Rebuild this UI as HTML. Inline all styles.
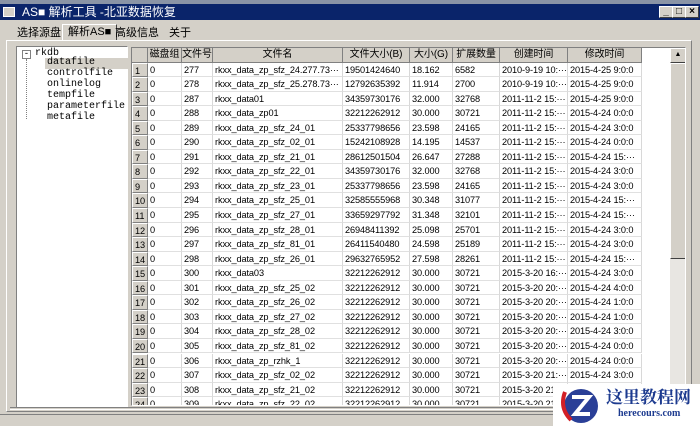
<!DOCTYPE html>
<html><head><meta charset="utf-8"><style>
*{margin:0;padding:0;box-sizing:border-box}
body{width:700px;height:426px;overflow:hidden;background:#d4d0c8;font:11px "Liberation Sans","Noto Sans CJK SC",sans-serif;color:#000;position:relative}
.abs{position:absolute}
#title{left:0;top:4px;width:700px;height:16px;background:#0a246a;color:#fff;font-size:12px;line-height:16px;padding-left:22px}
#title .ic{position:absolute;left:3px;top:3px;width:12px;height:10px;background:#d4d0c8;border:1px solid #fff}
.wb{position:absolute;top:2px;width:14px;height:12px;background:#d4d0c8;border:1px solid;border-color:#fff #404040 #404040 #fff;color:#000;font-size:10px;line-height:9px;text-align:center;font-weight:bold}
.tab{position:absolute;top:26px;height:14px;font-size:11px;line-height:14px;padding:0 5px}
#panel{left:6px;top:40px;width:686px;height:372px;border:1px solid;border-color:#fff #808080 #808080 #fff}
#tree{left:16px;top:46px;width:112px;height:362px;background:#fff;border:1px solid;border-color:#808080 #fff #fff #808080;font-family:"Liberation Mono",monospace;font-size:10px}
#grid{left:131px;top:47px;width:555px;height:359px;background:#fff;border:1px solid;border-color:#808080 #fff #fff #808080;overflow:hidden}
.row{position:absolute;left:0;height:14.55px;width:540px;font-size:9.2px;line-height:14px;letter-spacing:-0.1px}
.row span{position:absolute;top:0;height:14.55px;border-right:1px solid #d8d8d8;border-bottom:1px solid #e0e0e0;padding-left:2px;white-space:nowrap;overflow:hidden}
.hd span{background:#d4d0c8;border-right:1px solid #808080;border-bottom:1px solid #808080;text-align:center;padding:0;font-size:10px}
.row span.n{background:#d4d0c8;border:1px solid;border-color:#fff #808080 #808080 #fff;padding-left:2px}
.c0{left:0;width:16px}.c1{left:16px;width:34px}.c2{left:50px;width:31px}.c3{left:81px;width:130px}.c4{left:211px;width:67px}.c5{left:278px;width:43px}.c6{left:321px;width:47px}.c7{left:368px;width:68px}.c8{left:436px;width:74px}
</style></head><body>
<div class="abs" style="left:0;top:0;width:700px;height:4px;background:#8a94a6"></div>
<div id="title" class="abs"><div class="ic"></div>AS■ 解析工具 -北亚数据恢复
<div class="wb" style="left:659px">_</div><div class="wb" style="left:672px">□</div><div class="wb" style="left:685px">×</div></div>
<div class="tab" style="left:12px">选择源盘</div>
<div class="tab" style="left:62px;top:24px;height:17px;background:#d4d0c8;border:1px solid;border-color:#fff #404040 transparent #fff;line-height:15px">解析AS■</div>
<div class="tab" style="left:110px">高级信息</div>
<div class="tab" style="left:164px">关于</div>
<div class="abs" style="left:6px;top:40px;width:56px;height:1px;background:#fff"></div>
<div class="abs" style="left:108px;top:40px;width:584px;height:1px;background:#fff"></div>
<div id="panel" class="abs"></div>
<div id="tree" class="abs">
<div class="abs" style="left:5px;top:3px;width:9px;height:9px;border:1px solid #808080;font-size:9px;line-height:6px;text-align:center">-</div>
<div class="abs" style="left:18px;top:1px">rkdb</div>
<div class="abs" style="left:9px;top:12px;width:1px;height:60px;border-left:1px dotted #808080"></div>
<div class="abs" style="left:28px;top:11px;width:84px;height:11px;background:#d4d0c8"></div>
<div class="abs" style="left:30px;top:10px;line-height:11px">datafile<br>controlfile<br>onlinelog<br>tempfile<br>parameterfile<br>metafile</div>
</div>
<div id="grid" class="abs">
<div class="row hd" style="top:0"><span class="c0"></span><span class="c1">磁盘组</span><span class="c2">文件号</span><span class="c3">文件名</span><span class="c4">文件大小(B)</span><span class="c5">大小(G)</span><span class="c6">扩展数量</span><span class="c7">创建时间</span><span class="c8">修改时间</span></div>
<div class="row" style="top:14.5px"><span class="n c0">1</span><span class="c1">0</span><span class="c2">277</span><span class="c3">rkxx_data_zp_sfz_24.277.73···</span><span class="c4">19501424640</span><span class="c5">18.162</span><span class="c6">6582</span><span class="c7">2010-9-19 10:···</span><span class="c8">2015-4-25 9:0:0</span></div>
<div class="row" style="top:29.05px"><span class="n c0">2</span><span class="c1">0</span><span class="c2">278</span><span class="c3">rkxx_data_zp_sfz_25.278.73···</span><span class="c4">12792635392</span><span class="c5">11.914</span><span class="c6">2700</span><span class="c7">2010-9-19 10:···</span><span class="c8">2015-4-25 9:0:0</span></div>
<div class="row" style="top:43.6px"><span class="n c0">3</span><span class="c1">0</span><span class="c2">287</span><span class="c3">rkxx_data01</span><span class="c4">34359730176</span><span class="c5">32.000</span><span class="c6">32768</span><span class="c7">2011-11-2 15:···</span><span class="c8">2015-4-25 9:0:0</span></div>
<div class="row" style="top:58.15px"><span class="n c0">4</span><span class="c1">0</span><span class="c2">288</span><span class="c3">rkxx_data_zp01</span><span class="c4">32212262912</span><span class="c5">30.000</span><span class="c6">30721</span><span class="c7">2011-11-2 15:···</span><span class="c8">2015-4-24 0:0:0</span></div>
<div class="row" style="top:72.7px"><span class="n c0">5</span><span class="c1">0</span><span class="c2">289</span><span class="c3">rkxx_data_zp_sfz_24_01</span><span class="c4">25337798656</span><span class="c5">23.598</span><span class="c6">24165</span><span class="c7">2011-11-2 15:···</span><span class="c8">2015-4-24 3:0:0</span></div>
<div class="row" style="top:87.25px"><span class="n c0">6</span><span class="c1">0</span><span class="c2">290</span><span class="c3">rkxx_data_zp_sfz_02_01</span><span class="c4">15242108928</span><span class="c5">14.195</span><span class="c6">14537</span><span class="c7">2011-11-2 15:···</span><span class="c8">2015-4-24 0:0:0</span></div>
<div class="row" style="top:101.8px"><span class="n c0">7</span><span class="c1">0</span><span class="c2">291</span><span class="c3">rkxx_data_zp_sfz_21_01</span><span class="c4">28612501504</span><span class="c5">26.647</span><span class="c6">27288</span><span class="c7">2011-11-2 15:···</span><span class="c8">2015-4-24 15:···</span></div>
<div class="row" style="top:116.35px"><span class="n c0">8</span><span class="c1">0</span><span class="c2">292</span><span class="c3">rkxx_data_zp_sfz_22_01</span><span class="c4">34359730176</span><span class="c5">32.000</span><span class="c6">32768</span><span class="c7">2011-11-2 15:···</span><span class="c8">2015-4-24 3:0:0</span></div>
<div class="row" style="top:130.9px"><span class="n c0">9</span><span class="c1">0</span><span class="c2">293</span><span class="c3">rkxx_data_zp_sfz_23_01</span><span class="c4">25337798656</span><span class="c5">23.598</span><span class="c6">24165</span><span class="c7">2011-11-2 15:···</span><span class="c8">2015-4-24 3:0:0</span></div>
<div class="row" style="top:145.45px"><span class="n c0">10</span><span class="c1">0</span><span class="c2">294</span><span class="c3">rkxx_data_zp_sfz_25_01</span><span class="c4">32585555968</span><span class="c5">30.348</span><span class="c6">31077</span><span class="c7">2011-11-2 15:···</span><span class="c8">2015-4-24 15:···</span></div>
<div class="row" style="top:160px"><span class="n c0">11</span><span class="c1">0</span><span class="c2">295</span><span class="c3">rkxx_data_zp_sfz_27_01</span><span class="c4">33659297792</span><span class="c5">31.348</span><span class="c6">32101</span><span class="c7">2011-11-2 15:···</span><span class="c8">2015-4-24 15:···</span></div>
<div class="row" style="top:174.55px"><span class="n c0">12</span><span class="c1">0</span><span class="c2">296</span><span class="c3">rkxx_data_zp_sfz_28_01</span><span class="c4">26948411392</span><span class="c5">25.098</span><span class="c6">25701</span><span class="c7">2011-11-2 15:···</span><span class="c8">2015-4-24 3:0:0</span></div>
<div class="row" style="top:189.1px"><span class="n c0">13</span><span class="c1">0</span><span class="c2">297</span><span class="c3">rkxx_data_zp_sfz_81_01</span><span class="c4">26411540480</span><span class="c5">24.598</span><span class="c6">25189</span><span class="c7">2011-11-2 15:···</span><span class="c8">2015-4-24 3:0:0</span></div>
<div class="row" style="top:203.65px"><span class="n c0">14</span><span class="c1">0</span><span class="c2">298</span><span class="c3">rkxx_data_zp_sfz_26_01</span><span class="c4">29632765952</span><span class="c5">27.598</span><span class="c6">28261</span><span class="c7">2011-11-2 15:···</span><span class="c8">2015-4-24 15:···</span></div>
<div class="row" style="top:218.2px"><span class="n c0">15</span><span class="c1">0</span><span class="c2">300</span><span class="c3">rkxx_data03</span><span class="c4">32212262912</span><span class="c5">30.000</span><span class="c6">30721</span><span class="c7">2015-3-20 16:···</span><span class="c8">2015-4-24 3:0:0</span></div>
<div class="row" style="top:232.75px"><span class="n c0">16</span><span class="c1">0</span><span class="c2">301</span><span class="c3">rkxx_data_zp_sfz_25_02</span><span class="c4">32212262912</span><span class="c5">30.000</span><span class="c6">30721</span><span class="c7">2015-3-20 20:···</span><span class="c8">2015-4-24 4:0:0</span></div>
<div class="row" style="top:247.3px"><span class="n c0">17</span><span class="c1">0</span><span class="c2">302</span><span class="c3">rkxx_data_zp_sfz_26_02</span><span class="c4">32212262912</span><span class="c5">30.000</span><span class="c6">30721</span><span class="c7">2015-3-20 20:···</span><span class="c8">2015-4-24 1:0:0</span></div>
<div class="row" style="top:261.85px"><span class="n c0">18</span><span class="c1">0</span><span class="c2">303</span><span class="c3">rkxx_data_zp_sfz_27_02</span><span class="c4">32212262912</span><span class="c5">30.000</span><span class="c6">30721</span><span class="c7">2015-3-20 20:···</span><span class="c8">2015-4-24 1:0:0</span></div>
<div class="row" style="top:276.4px"><span class="n c0">19</span><span class="c1">0</span><span class="c2">304</span><span class="c3">rkxx_data_zp_sfz_28_02</span><span class="c4">32212262912</span><span class="c5">30.000</span><span class="c6">30721</span><span class="c7">2015-3-20 20:···</span><span class="c8">2015-4-24 3:0:0</span></div>
<div class="row" style="top:290.95px"><span class="n c0">20</span><span class="c1">0</span><span class="c2">305</span><span class="c3">rkxx_data_zp_sfz_81_02</span><span class="c4">32212262912</span><span class="c5">30.000</span><span class="c6">30721</span><span class="c7">2015-3-20 20:···</span><span class="c8">2015-4-24 0:0:0</span></div>
<div class="row" style="top:305.5px"><span class="n c0">21</span><span class="c1">0</span><span class="c2">306</span><span class="c3">rkxx_data_zp_rzhk_1</span><span class="c4">32212262912</span><span class="c5">30.000</span><span class="c6">30721</span><span class="c7">2015-3-20 20:···</span><span class="c8">2015-4-24 0:0:0</span></div>
<div class="row" style="top:320.05px"><span class="n c0">22</span><span class="c1">0</span><span class="c2">307</span><span class="c3">rkxx_data_zp_sfz_02_02</span><span class="c4">32212262912</span><span class="c5">30.000</span><span class="c6">30721</span><span class="c7">2015-3-20 21:···</span><span class="c8">2015-4-24 3:0:0</span></div>
<div class="row" style="top:334.6px"><span class="n c0">23</span><span class="c1">0</span><span class="c2">308</span><span class="c3">rkxx_data_zp_sfz_21_02</span><span class="c4">32212262912</span><span class="c5">30.000</span><span class="c6">30721</span><span class="c7">2015-3-20 21:···</span><span class="c8">2015-4-24 3:0:0</span></div>
<div class="row" style="top:349.15px"><span class="n c0">24</span><span class="c1">0</span><span class="c2">309</span><span class="c3">rkxx_data_zp_sfz_22_02</span><span class="c4">32212262912</span><span class="c5">30.000</span><span class="c6">30721</span><span class="c7">2015-3-20 21:···</span><span class="c8">2015-4-24 3:0:0</span></div>
<div class="abs" style="left:538px;top:0;width:16px;height:359px;background:#e8e6e2"></div>
<div class="abs" style="left:538px;top:0;width:16px;height:15px;background:#d4d0c8;border:1px solid;border-color:#fff #404040 #404040 #fff;font-size:7px;text-align:center;line-height:12px">▲</div>
<div class="abs" style="left:538px;top:15px;width:16px;height:196px;background:#d4d0c8;border:1px solid;border-color:#fff #404040 #404040 #fff"></div>
</div>
<div class="abs" style="left:10px;top:407px;width:680px;height:3px;border-top:1px solid #808080;border-bottom:1px solid #fff"></div>
<div class="abs" style="left:0;top:414px;width:700px;height:1px;background:#808080"></div>
<div class="abs" style="left:553px;top:384px;width:147px;height:42px;background:#fff"></div>
<svg class="abs" style="left:557px;top:384px" width="46" height="42" viewBox="0 0 46 42">
<circle cx="24" cy="22" r="17" fill="#2a3f97"/>
<path d="M8 8 Q2 24 14 36" stroke="#d21f26" stroke-width="4" fill="none"/>
<path d="M15 13 H32 L18 30 H33" stroke="#fff" stroke-width="4" fill="none"/>
</svg>
<div class="abs" style="left:606px;top:386px;color:#1c3a8f;font:bold 17px 'Noto Serif CJK SC','Noto Sans CJK SC',serif;line-height:20px">这里教程网</div>
<div class="abs" style="left:618px;top:408px;color:#1c3a8f;font:bold 10px 'Liberation Serif',serif">herecours.com</div>
</body></html>
